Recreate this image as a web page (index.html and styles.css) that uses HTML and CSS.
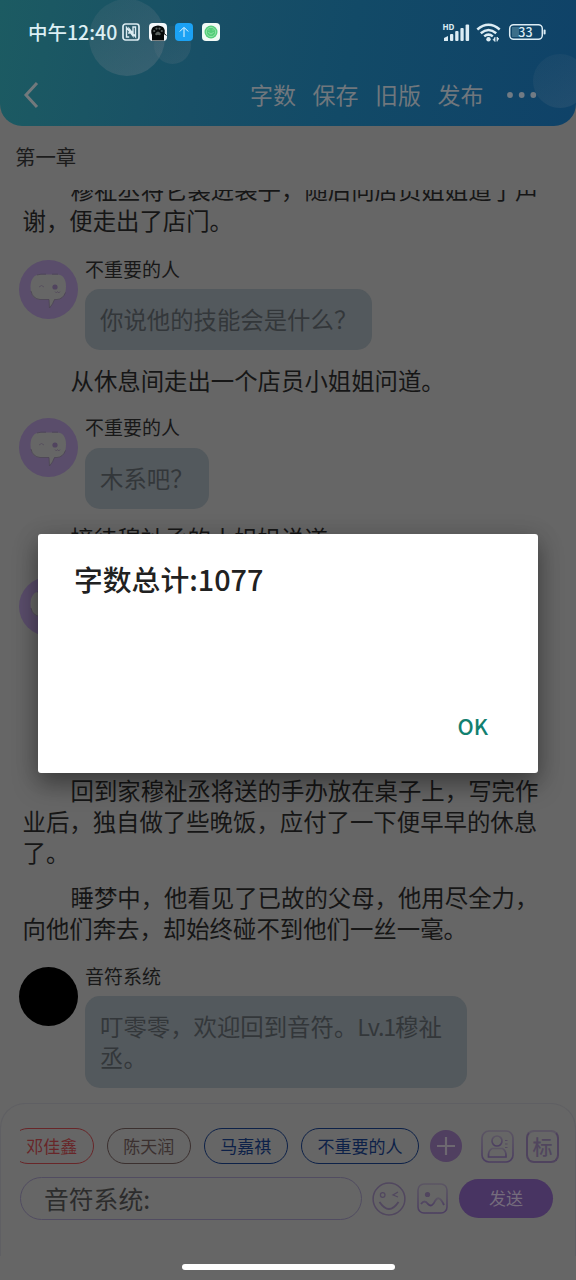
FILE: index.html
```html
<!DOCTYPE html>
<html lang="zh-CN">
<head>
<meta charset="utf-8">
<title>第一章</title>
<link rel="stylesheet" href="styles.css">
</head>
<body>
<svg class="defs" width="0" height="0">
  <defs>
    <linearGradient id="edge" x1="0" y1="0" x2="0" y2="1"><stop offset="0" stop-color="#5b5563"/><stop offset="1" stop-color="#4c3e61"/></linearGradient>
    <symbol id="face" viewBox="0 0 59 59">
      <circle cx="29.5" cy="29.5" r="29.5" fill="#5a4d6b"/>
      <path d="M21 14.500H38C44 14.500 47 19 47 26.500S44 39.500 38 39.500H35.500Q34 44 30.500 48L30 39.500H21C14.500 39.500 11.500 34 11.500 27S14.500 14.500 21 14.500z" fill="#666"/>
      <path d="M12 31q1.500 7.500 9 8.500h9l.5 8.500q3.500-4 5-8.500H38q6-.5 8.500-7M18 15l4-.8h5m6 0h6" fill="none" stroke="#494252" stroke-width=".7"/>
      <path d="M20 27q2.500-3 5 0M36 31.500q1.500 3 2.500 0 1.500 3 2.500 0" fill="none" stroke="#544b5c" stroke-width=".8"/>
      <circle cx="36" cy="27" r="2.600" fill="#51445f"/>
    </symbol>
  </defs>
</svg>
<div class="screen">
  <header class="header">
    <span class="bubble-deco deco-a"></span><span class="bubble-deco deco-b"></span><span class="bubble-deco deco-c"></span>
    <div class="status">
      <span class="clock">中午12:40</span>
      <svg width="18" height="18" viewBox="0 0 18 18"><rect x="1" y="1" width="16" height="16" rx="2.500" fill="none" stroke="#dcecf2" stroke-width="1.700"/><path d="M7.200 14H4.500V4.500L11 13V4h2.500v9.800L7 5.500V11" fill="none" stroke="#dcecf2" stroke-width="1.400"/></svg>
      <svg class="app" width="18" height="18" viewBox="0 0 18 18"><rect width="18" height="18" rx="4" fill="#f4f8fa"/><path d="M3 17.500V12Q1 7 4 4q5-3 10 0 3 3 1 8v5.500z" fill="#050808"/><g fill="#59605d"><circle cx="5.200" cy="8" r="1.100"/><circle cx="7.500" cy="5.600" r="1.100"/><circle cx="10.500" cy="5.600" r="1.100"/><circle cx="12.800" cy="8" r="1.100"/><path d="M6 11q3-5 6 0-1.500 2-3 .8Q7 13 6 11z"/></g><path d="M14.500 10l3 2.500" stroke="#111"/></svg>
      <svg class="app" width="18" height="18" viewBox="0 0 18 18"><rect width="18" height="18" rx="4" fill="#1ba2f4"/><path d="M9 14V5M4.800 8.500L9 4.300l4.200 4.200" fill="none" stroke="#e9f8ff" stroke-width="1"/></svg>
      <svg class="app" width="18" height="18" viewBox="0 0 18 18"><rect width="18" height="18" rx="4" fill="#f2faf6"/><circle cx="9" cy="9" r="6.500" fill="#55cd7a"/><g fill="none" stroke="#a0e8b2" stroke-width=".8"><circle cx="9" cy="9" r="4.700"/><path d="M6.400 9q2.600 4 5.200 0M7 6.500v1M11 6.500v1"/></g></svg>
      <span class="grow"></span>
      <svg width="104" height="20" viewBox="442 22 104 20">
        <text x="442.500" y="29.500" class="hd">HD</text>
        <g fill="#dcecf4"><path d="M444 41v-3l4-2v5z"/><rect x="450" y="34" width="3.300" height="7" rx="1"/><rect x="455.200" y="31" width="3.300" height="10" rx="1"/><rect x="460.400" y="28" width="3.300" height="13" rx="1"/><rect x="465.600" y="24.500" width="3.500" height="16.500" rx="1"/><circle cx="488.500" cy="39.200" r="2.200"/><path d="M495 37v4.500l-2-2M497 41.500V37l2 2" stroke="#dcecf4" stroke-width=".8"/></g>
        <g fill="none" stroke="#dcecf4" stroke-width="2.500"><path d="M477.300 29.500q11.200-9.500 22.400 0M480.800 33.200q7.700-6.500 15.400 0M484.200 36.400q4.300-3.500 8.600 0"/></g>
        <rect x="512" y="27" width="7" height="10" fill="#3b6e89"/><rect x="509.700" y="24.700" width="32.600" height="14.600" rx="4" fill="none" stroke="#dcecf4" stroke-width="1.500"/><rect x="543.600" y="29.500" width="2" height="5" rx="1" fill="#dcecf4"/>
        <text x="525.500" y="36.800" class="battery">33</text>
      </svg>
    </div>
    <nav class="toolbar">
      <svg class="back" width="16" height="28" viewBox="0 0 16 28"><path d="M14 2L3 14l11 12" fill="none" stroke="#72797c" stroke-width="3"/></svg>
      <span>字数</span><span>保存</span><span>旧版</span><span>发布</span>
      <svg class="more" width="30" height="6" viewBox="0 0 30 6" fill="#717b84"><circle cx="3" cy="3" r="2.900"/><circle cx="14.700" cy="3" r="2.900"/><circle cx="26.300" cy="3" r="2.900"/></svg>
    </nav>
  </header>
  <h1 class="chapter">第一章</h1>
  <main class="story">
    <p class="first">穆祉丞将它装进袋子，随后向店员姐姐道了声谢，便走出了店门。</p>
    <div class="message"><svg class="avatar"><use href="#face"/></svg><div><div class="name">不重要的人</div><div class="speech">你说他的技能会是什么？</div></div></div>
    <p>从休息间走出一个店员小姐姐问道。</p>
    <div class="message"><svg class="avatar"><use href="#face"/></svg><div><div class="name">不重要的人</div><div class="speech">木系吧？</div></div></div>
    <p>接待穆祉丞的小姐姐说道</p>
    <div class="message covered"><svg class="avatar"><use href="#face"/></svg></div>
    <p>回到家穆祉丞将送的手办放在桌子上，写完作业后，独自做了些晚饭，应付了一下便早早的休息了。</p>
    <p>睡梦中，他看见了已故的父母，他用尽全力，向他们奔去，却始终碰不到他们一丝一毫。</p>
    <div class="message"><span class="avatar black"></span><div><div class="name">音符系统</div><div class="speech">叮零零，欢迎回到音符。<span class="latin">Lv.1</span>穆祉丞。</div></div></div>
  </main>
  <footer class="composer">
    <div class="row roles">
      <div class="chips"><span class="chip red">邓佳鑫</span><span class="chip brown">陈天润</span><span class="chip blue">马嘉祺</span><span class="chip blue wide">不重要的人</span></div>
      <svg class="add" width="32" height="32" viewBox="0 0 32 32"><circle cx="16" cy="16" r="16" fill="#503f60"/><path d="M16 7v18M7 16h18" stroke="#6d6870" stroke-width="2.200"/></svg>
      <svg class="person" width="33" height="33" viewBox="0 0 33 33" fill="none" stroke="url(#edge)" stroke-width="1.700"><rect x="1" y="1" width="31" height="31" rx="7"/><circle cx="16" cy="11" r="5"/><path d="M11 18.500h10.500q4 2 3.500 8.500H7.500q-.5-6.500 3.500-8.500z"/><path d="M24 10.500h2.500M24 14h2.500M24 17.500h2.500" stroke="#544a60" stroke-width="1"/></svg>
      <span class="tag">标</span>
    </div>
    <div class="row">
      <div class="input">音符系统:</div>
      <svg class="emoji" width="34" height="34" viewBox="0 0 34 34" fill="none" stroke="#51475f" stroke-width="1.500"><circle cx="17" cy="17" r="15.900"/><circle cx="10.700" cy="13" r="2.300" stroke-width="1.200"/><path d="M26 10l-5 3 5 2" stroke-width="1.200"/><path d="M7.500 20q9.500 14 19 0" stroke-width="1.800"/></svg>
      <svg class="photo" width="31" height="31" viewBox="0 0 31 31" fill="none" stroke="url(#edge)" stroke-width="1.600"><rect x="1" y="1" width="29" height="29" rx="6"/><circle cx="10.500" cy="11.500" r="2.600" fill="#51455f" stroke="none"/><path d="M4 21q3.500-5 7 0 4 4 7-3 4-7 9 4" stroke-width="1.900"/></svg>
      <span class="send">发送</span>
    </div>
  </footer>
  <div class="home"></div>
  <section class="dialog"><h2>字数总计:1077</h2><span class="ok">OK</span></section>
</div>
</body>
</html>
```

FILE: styles.css
```css
* { box-sizing: border-box; }
body { margin: 0; background: #666; font-family: "Noto Sans CJK SC", "Noto Sans", sans-serif; }
.defs { position: absolute; }
.screen { position: relative; width: 576px; height: 1280px; overflow: hidden; display: flex; flex-direction: column; background: #666; }
.header { position: relative; flex: none; height: 126px; overflow: hidden; border-radius: 0 0 22px 22px; background: linear-gradient(100deg, #1c5b62 0%, #184f66 35%, #124a67 60%, #0f4268 100%); }
.bubble-deco { position: absolute; border-radius: 50%; background: linear-gradient(150deg, rgba(120,130,140,.12), rgba(120,130,140,.32)); }
.deco-a { left: 89px; top: -1px; width: 76px; height: 77px; }
.deco-b { left: 154px; top: 26px; width: 37px; height: 38px; opacity: .6; }
.deco-c { left: 533px; top: 54px; width: 54px; height: 54px; opacity: .55; }
.status { position: relative; display: flex; align-items: center; height: 64px; padding: 0 30px 0 28px; }
.clock { width: 94px; padding-bottom: 2px; color: #dceff4; font-size: 19.500px; font-weight: 500; white-space: nowrap; }
.status .app { margin-left: 8.500px; }
.grow { flex: 1; }
.hd { fill: #dcecf4; font: 700 8px "Noto Sans", sans-serif; }
.battery { fill: #dcecf4; font: 500 12.500px "Noto Sans CJK SC", sans-serif; text-anchor: middle; }
.toolbar { position: relative; display: flex; align-items: center; height: 62px; padding: 0 39px 0 23px; color: #70777d; font-size: 23px; gap: 16.500px; }
.toolbar span { padding-bottom: 2px; }
.back { margin-right: auto; }
.more { margin-left: 7px; }
.chapter { flex: none; margin: 0; height: 64px; padding-left: 15px; font-size: 20.400px; line-height: 60px; font-weight: 400; color: #1c1c1c; }
.story { flex: none; height: 913px; overflow: hidden; padding: 0 14px 0 22.500px; }
p { margin: 14.500px 0 0; width: 520px; font-size: 23.400px; line-height: 31px; text-indent: 48px; color: #161616; }
.first { margin-top: -16px; }
.message { display: flex; gap: 7px; margin: 22.500px 0 0 -3.500px; }
.first + .message { margin-top: 23.500px; }
.avatar { flex: none; display: block; width: 59px; height: 59px; }
.black { border-radius: 50%; background: #000; }
.name { height: 29.500px; font-size: 19px; line-height: 18px; color: #181818; }
.speech { width: fit-content; max-width: 382px; padding: 15px; border-radius: 15px; background: #53595d; color: #33373a; font-size: 23.400px; line-height: 31px; }
.latin { letter-spacing: -1.200px; }
.covered { height: 183.500px; }
.composer { flex: none; height: 153px; padding: 24px 16px 0 19px; border: 1.500px solid #5f5f63; border-bottom: 0; border-radius: 25px 25px 0 0; }
.row { display: flex; align-items: center; height: 36px; }
.row + .row { height: 43px; margin-top: 13px; }
.chips { display: flex; gap: 12.800px; width: 400px; overflow: hidden; }
.chip { flex: none; width: 84.300px; height: 36px; border: 1.500px solid; border-radius: 18px; text-align: center; font-size: 17px; line-height: 33px; }
.red { margin-left: -10.500px; color: #682629; }
.brown { color: #3b302f; }
.blue { color: #0d2148; }
.wide { width: 118.500px; }
.add { margin-left: 10px; }
.person { margin-left: 18.500px; }
.tag { width: 33px; height: 33px; margin-left: 12.500px; border: 2px solid #4f435e; border-top-color: #5b5563; border-radius: 8px; color: #51465e; font-size: 20px; line-height: 29px; text-align: center; font-weight: 500; }
.input { width: 341.500px; height: 43px; padding-left: 23px; border: 1.500px solid #514c61; border-radius: 22px; font-size: 24.800px; line-height: 40px; color: #2c2c2c; }
.emoji { margin-left: 10px; }
.photo { margin-left: 11.500px; }
.send { width: 94px; height: 39px; margin-left: 11px; border-radius: 20px; background: #483462; color: #756c7c; text-align: center; font-size: 17px; line-height: 38px; }
.home { width: 213px; height: 6px; margin: 8px auto 0; border-radius: 3px; background: #fff; }
.dialog { position: absolute; left: 38px; top: 534px; width: 500px; height: 239px; padding: 24px 50px 30px 36px; display: flex; flex-direction: column; justify-content: space-between; border-radius: 3px; background: #fff; box-shadow: 0 12px 24px rgba(0,0,0,.35), 0 2px 24px rgba(0,0,0,.14); }
.dialog h2 { margin: 0; font-size: 28.800px; line-height: 42px; font-weight: 500; color: #212121; }
.ok { align-self: flex-end; font-size: 21.500px; line-height: 34px; font-weight: 500; color: #128070; }
```
